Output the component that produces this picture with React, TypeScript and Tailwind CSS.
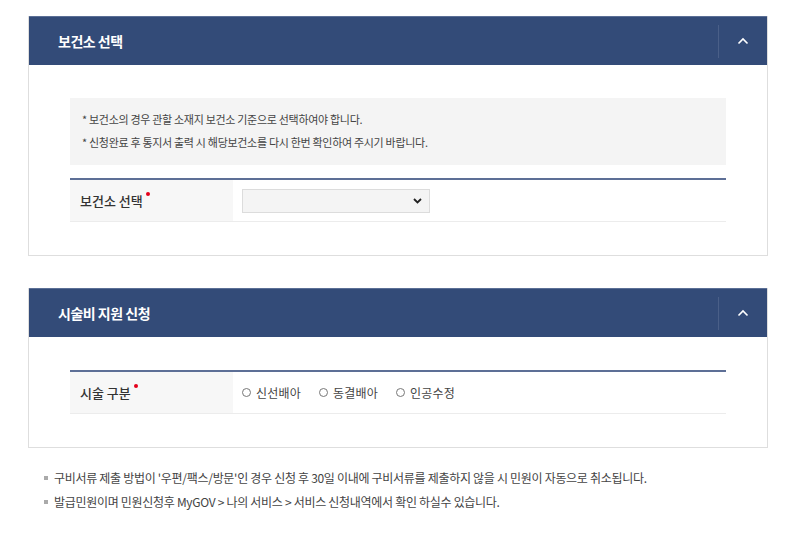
import React from 'react'

const font = { fontFamily: '"Noto Sans CJK KR", "Noto Sans", sans-serif' }

function PanelHeader({ title }: { title: string }) {
  return (
    <div className="flex h-[49px] items-center bg-[#334b78] border-t border-[#5b6f96]">
      <h2 className="flex-1 pl-[29px] text-[14px] font-bold tracking-[-0.5px] text-white">{title}</h2>
      <div className="h-[33px] w-px bg-[#4a5f88]" />
      <button className="flex h-full w-[48px] items-center justify-center text-white">
        <svg width="12" height="8" viewBox="0 0 12 8" fill="none">
          <path d="M1.5 6.5L6 2l4.5 4.5" stroke="white" strokeWidth="1.6" />
        </svg>
      </button>
    </div>
  )
}

function Required() {
  return <span className="relative -top-[7px] ml-[3px] inline-block h-[4px] w-[4px] rounded-full bg-[#e4001b]" />
}

function Row({ label, children }: { label: string; children: React.ReactNode }) {
  return (
    <div className="flex border-t-2 border-[#5d6f96] border-b border-b-[#ececec]">
      <div className="flex h-[41px] w-[163px] items-center bg-[#f7f7f7] pl-[10px] text-[13px] font-medium text-[#333]">
        {label}
        <Required />
      </div>
      <div className="flex flex-1 items-center pl-[9px]">{children}</div>
    </div>
  )
}

function Radio({ label }: { label: string }) {
  return (
    <label className="mr-[18px] flex items-center text-[12px] tracking-[0.2px] text-[#444]">
      <span className="mr-[5px] inline-block h-[9px] w-[9px] rounded-full border border-[#777]" />
      {label}
    </label>
  )
}

export default function App() {
  return (
    <div className="min-h-[533px] bg-white pt-[16px]" style={font}>
      <section className="ml-[28px] w-[740px] border-x border-b border-[#dedede]">
        <PanelHeader title="보건소 선택" />
        <div className="px-[41px] pb-[33px] pt-[33px]">
          <div className="bg-[#f4f4f4] pl-[12px] pt-[10px] pb-[11px] text-[11px] leading-[23px] tracking-[-0.3px] text-[#444]">
            <p>* 보건소의 경우 관할 소재지 보건소 기준으로 선택하여야 합니다.</p>
            <p>* 신청완료 후 통지서 출력 시 해당보건소를 다시 한번 확인하여 주시기 바랍니다.</p>
          </div>
          <div className="mt-[13px]">
            <Row label="보건소 선택">
              <div className="relative flex h-[24px] w-[188px] items-center border border-[#dcdcdc] bg-[#f4f4f4]">
                <svg className="absolute right-[7px]" width="9" height="6" viewBox="0 0 9 6">
                  <path d="M1 1l3.5 3.5L8 1" stroke="#222" strokeWidth="1.8" fill="none" />
                </svg>
              </div>
            </Row>
          </div>
        </div>
      </section>

      <section className="ml-[28px] mt-[32px] w-[740px] border-x border-b border-[#dedede]">
        <PanelHeader title="시술비 지원 신청" />
        <div className="px-[41px] pb-[33px] pt-[33px]">
          <Row label="시술 구분">
            <Radio label="신선배아" />
            <Radio label="동결배아" />
            <Radio label="인공수정" />
          </Row>
        </div>
      </section>

      <ul className="ml-[44px] mt-[18px] text-[12px] leading-[24px] tracking-[-0.3px] text-[#444]">
        <li className="flex items-center">
          <span className="mr-[6px] inline-block h-[4px] w-[4px] bg-[#aaa]" />
          구비서류 제출 방법이 '우편/팩스/방문'인 경우 신청 후 30일 이내에 구비서류를 제출하지 않을 시 민원이 자동으로 취소됩니다.
        </li>
        <li className="flex items-center">
          <span className="mr-[6px] inline-block h-[4px] w-[4px] bg-[#aaa]" />
          발급민원이며 민원신청후 MyGOV &gt; 나의 서비스 &gt; 서비스 신청내역에서 확인 하실수 있습니다.
        </li>
      </ul>
    </div>
  )
}
